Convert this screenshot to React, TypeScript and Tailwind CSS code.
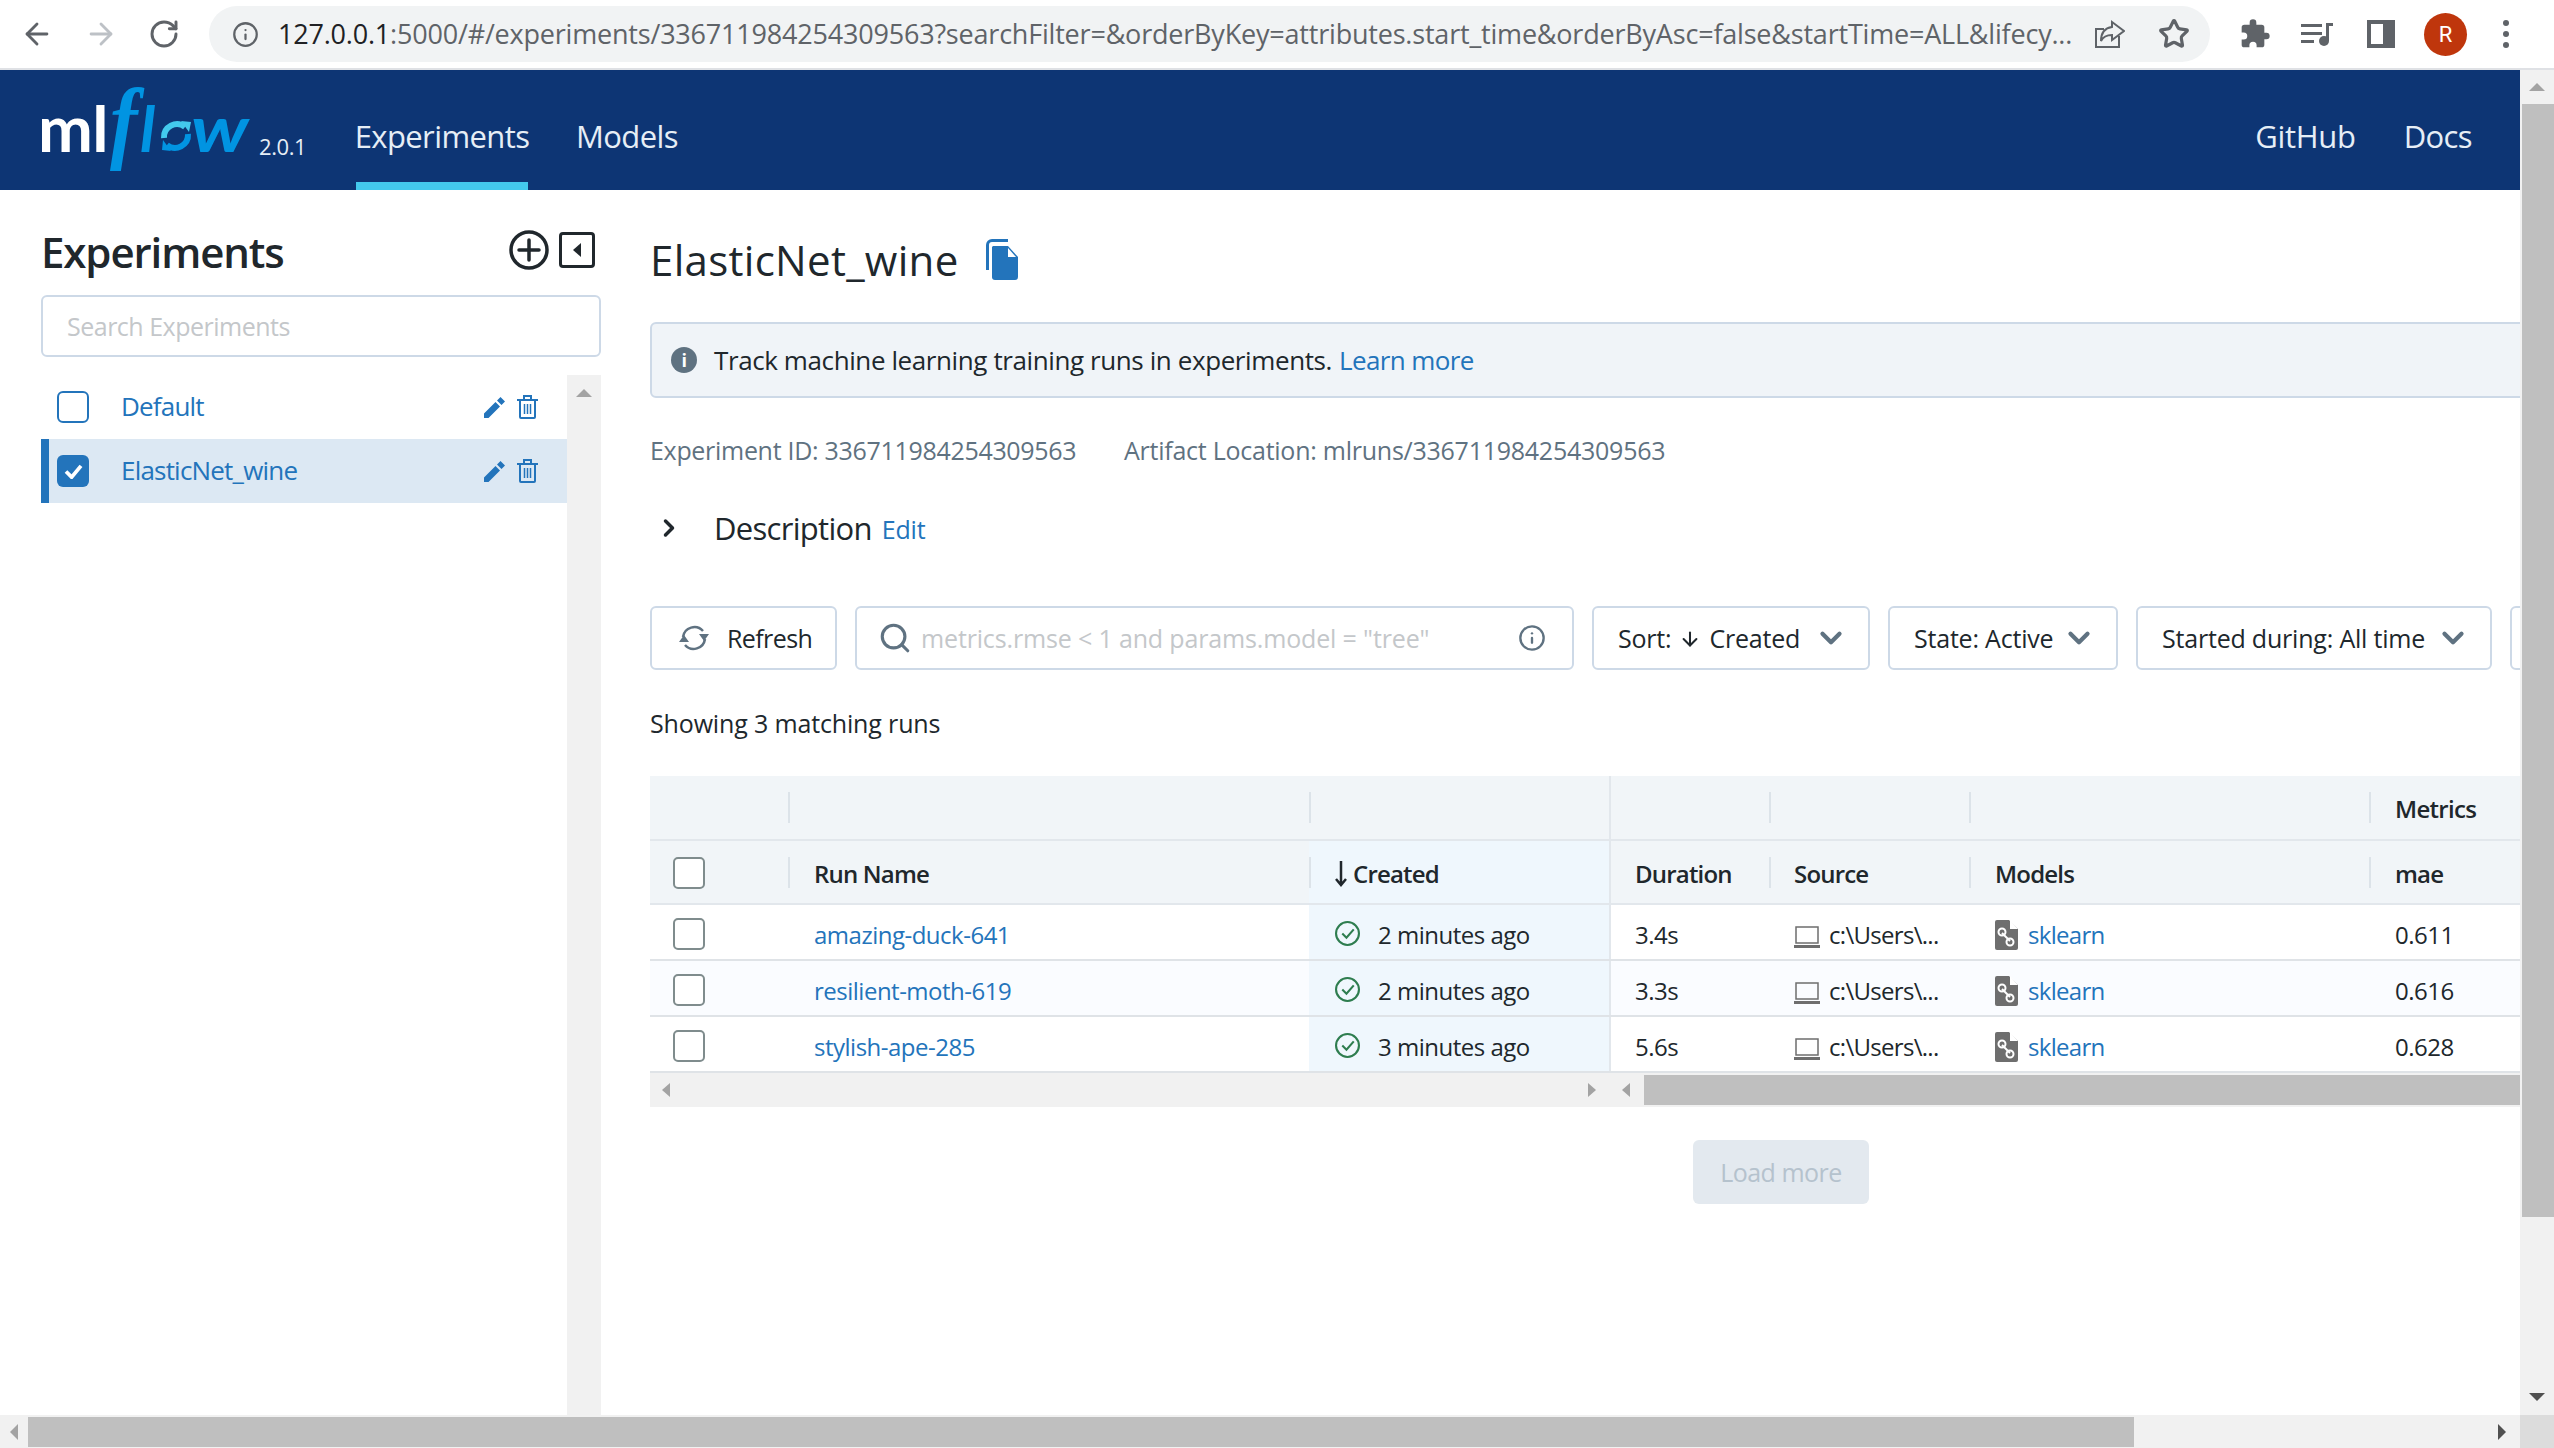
import { ArrowDown, ArrowLeft, ArrowRight, ChevronDown, ChevronRight, Info, RotateCw, Search, Star } from "lucide-react";

const font = "[font-family:'Open_Sans','Noto_Sans',sans-serif]";

const runs = [
  { name: "amazing-duck-641", created: "2 minutes ago", duration: "3.4s", mae: "0.611", bg: "bg-white" },
  { name: "resilient-moth-619", created: "2 minutes ago", duration: "3.3s", mae: "0.616", bg: "bg-[#fafcff]" },
  { name: "stylish-ape-285", created: "3 minutes ago", duration: "5.6s", mae: "0.628", bg: "bg-white" },
];

function Logo() {
  return (
    <div className="flex items-center w-[316px] pl-[41px] h-full shrink-0">
      <svg viewBox="0 0 208 80" className="w-[208px] h-[80px] shrink-0 overflow-visible">
        <text x="-3" y="62" fill="#fff" fontFamily="Lato, sans-serif" fontWeight="700" fontSize="64" textLength="70" lengthAdjust="spacingAndGlyphs">ml</text>
        <text x="69" y="62" fill="#0194e2" fontFamily="'Liberation Serif', serif" fontStyle="italic" fontWeight="700" fontSize="90" textLength="27" lengthAdjust="spacingAndGlyphs">f</text>
        <text x="99" y="62" fill="#0194e2" fontFamily="Lato, sans-serif" fontStyle="italic" fontWeight="700" fontSize="64">l</text>
        <g transform="translate(120 30)" fill="none">
          <path d="M3 18 A13 13 0 0 1 24 7" stroke="#43c9ed" strokeWidth="6" />
          <path d="M27 14 A13 13 0 0 1 6 25" stroke="#0194e2" strokeWidth="6" />
          <path d="M20 1 L30 2 L28 12 Z" fill="#43c9ed" />
          <path d="M10 31 L1 30 L2 20 Z" fill="#0194e2" />
        </g>
        <text x="150" y="62" fill="#0194e2" fontFamily="Lato, sans-serif" fontStyle="italic" fontWeight="700" fontSize="64" textLength="57" lengthAdjust="spacingAndGlyphs">w</text>
      </svg>
      <span className="text-[22px] tracking-[-0.4px] text-[#e6eef6] ml-[10px] mt-[32px]">2.0.1</span>
    </div>
  );
}

function BrowserBar() {
  return (
    <div className="h-[70px] shrink-0 bg-white border-b-2 border-[#dfe1e5] flex items-center text-[#5f6368]">
      <div className="w-[209px] shrink-0 flex items-center pl-[20px] gap-[30px]">
        <ArrowLeft size={34} strokeWidth={2} />
        <ArrowRight size={34} strokeWidth={2} className="text-[#bdc1c6]" />
        <RotateCw size={32} strokeWidth={2.2} />
      </div>
      <div className="w-[2001px] h-[56px] shrink-0 bg-[#f1f3f4] rounded-full flex items-center pl-[23px] pr-[20px]">
        <Info size={27} strokeWidth={2} />
        <div className="ml-[19px] w-[1794px] text-[27px] tracking-[-0.2px] whitespace-nowrap overflow-hidden">
          <span className="text-[#202124]">127.0.0.1</span>:5000/#/experiments/336711984254309563?searchFilter=&amp;orderByKey=attributes.start_time&amp;orderByAsc=false&amp;startTime=ALL&amp;lifecy...
        </div>
        <svg viewBox="0 0 30 28" className="w-[30px] h-[28px] ml-[23px] shrink-0" fill="none" stroke="#5f6368" strokeWidth="2">
          <path d="M24 16v11H1V9h8" />
          <path d="M17 2l12 9-12 9v-5c-6 0-9 2-11 6 0-8 4-13 11-14z" />
        </svg>
        <Star size={32} strokeWidth={2.4} className="ml-[33px] shrink-0" />
      </div>
      <div className="flex-1 flex items-center pl-[29px]">
        <svg viewBox="0 0 24 24" className="w-[32px] h-[32px]" fill="#5f6368">
          <path d="M20.5 11H19V7a2 2 0 0 0-2-2h-4V3.5a2.5 2.5 0 0 0-5 0V5H4a2 2 0 0 0-2 2v3.8h1.5a2.7 2.7 0 0 1 0 5.4H2V20a2 2 0 0 0 2 2h3.8v-1.5a2.7 2.7 0 0 1 5.4 0V22H17a2 2 0 0 0 2-2v-4h1.5a2.5 2.5 0 0 0 0-5z" />
        </svg>
        <svg viewBox="0 0 32 24" className="w-[32px] h-[24px] ml-[30px]" fill="#5f6368">
          <rect x="0" y="2" width="21" height="3" />
          <rect x="0" y="10" width="21" height="3" />
          <rect x="0" y="18" width="13" height="3" />
          <rect x="25" y="1" width="3" height="18" />
          <rect x="25" y="1" width="7" height="3" />
          <circle cx="23" cy="19" r="5" />
        </svg>
        <div className="w-[28px] h-[28px] ml-[34px] border-[4px] border-r-[12px] border-[#5f6368]" />
        <div className="w-[43px] h-[43px] ml-[29px] rounded-full bg-[#bf360c] text-white text-[22px] flex items-center justify-center [font-family:Roboto,sans-serif]">R</div>
        <div className="ml-[36px] flex flex-col gap-[5px]">
          <div className="w-[6px] h-[6px] rounded-full bg-[#5f6368]" />
          <div className="w-[6px] h-[6px] rounded-full bg-[#5f6368]" />
          <div className="w-[6px] h-[6px] rounded-full bg-[#5f6368]" />
        </div>
      </div>
    </div>
  );
}

function Pencil() {
  return (
    <svg viewBox="0 0 21 21" className="w-[21px] h-[21px]" fill="#2374bb">
      <path d="M0 16.5V21h4.5L16 9.5 11.5 5zM13 3.5 17.5 8 21 4.500 16.500 0z" />
    </svg>
  );
}

function Trash() {
  return (
    <svg viewBox="0 0 21 24" className="w-[21px] h-[24px]" fill="none" stroke="#2374bb" strokeWidth="2">
      <path d="M0 5h21M7 5V1h7v4M3 5v17a1 1 0 0 0 1 1h13a1 1 0 0 0 1-1V5" />
      <path d="M7.500 9v10M10.500 9v10M13.500 9v10" strokeWidth="1.500" />
    </svg>
  );
}

function SidebarRow({ label, active }: { label: string; active?: boolean }) {
  return (
    <div className={`h-[64px] flex items-center text-[26px] text-[#2374bb] ${active ? "bg-[#dce8f3] border-l-[8px] border-[#2374bb] pl-[8px]" : "pl-[16px]"}`}>
      {active ? (
        <div className="w-[32px] h-[32px] rounded-[6px] bg-[#2374bb] flex items-center justify-center">
          <svg viewBox="0 0 20 16" className="w-[19px] h-[15px]" fill="none" stroke="white" strokeWidth="4">
            <path d="M2 8l6 6L18 2" />
          </svg>
        </div>
      ) : (
        <div className="w-[32px] h-[32px] rounded-[6px] border-2 border-[#2374bb]" />
      )}
      <span className="ml-[32px] flex-1 tracking-[-0.8px] mt-[-1px]">{label}</span>
      <Pencil />
      <div className="ml-[12px] mr-[29px]">
        <Trash />
      </div>
    </div>
  );
}

function Sidebar() {
  return (
    <div className="w-[601px] shrink-0 pl-[41px] flex flex-col">
      <div className="h-[105px] pt-[40px] flex items-start justify-between">
        <h2 className="text-[42px] leading-[44px] font-semibold text-[#20272c] tracking-[-1.1px]">Experiments</h2>
        <div className="flex items-center gap-[10px] mr-[6px]">
          <svg viewBox="0 0 40 40" className="w-[40px] h-[40px]" fill="none" stroke="#20272c" strokeWidth="3.500">
            <circle cx="20" cy="20" r="18" />
            <path d="M20 10v20M10 20h20" strokeLinecap="round" />
          </svg>
          <div className="w-[36px] h-[36px] rounded-[4px] border-[3.5px] border-[#20272c] flex items-center justify-center">
            <div className="w-0 h-0 border-y-[7px] border-y-transparent border-r-[8px] border-r-[#20272c]" />
          </div>
        </div>
      </div>
      <div className="h-[62px] rounded-[6px] border-2 border-[#cdd9e7] pl-[24px] flex items-center text-[25px] text-[#c4c7ca] tracking-[-0.5px]">
        <span className="mt-[2px]">Search Experiments</span>
      </div>
      <div className="flex-1 mt-[18px] flex">
        <div className="flex-1 flex flex-col">
          <SidebarRow label="Default" />
          <SidebarRow label="ElasticNet_wine" active />
        </div>
        <div className="w-[34px] bg-[#f1f1f1] flex justify-center pt-[14px]">
          <div className="w-0 h-0 border-x-[8px] border-x-transparent border-b-[8px] border-b-[#a3a3a3]" />
        </div>
      </div>
    </div>
  );
}

function ToolButton({ label, width }: { label: React.ReactNode; width: string }) {
  return (
    <div className={`${width} h-[64px] shrink-0 rounded-[6px] border-2 border-[#cdd9e7] flex items-center justify-between pl-[24px] pr-[20px] text-[25px] text-[#20272c] tracking-[-0.2px]`}>
      <span className="whitespace-nowrap flex items-center mt-[1px]">{label}</span>
      <ChevronDown size={34} strokeWidth={3} className="text-[#5f7281]" />
    </div>
  );
}

function Divider() {
  return <div className="absolute left-0 top-[16px] h-[31px] w-[2px] bg-[#dce3e9]" />;
}

const cols = ["w-[138px]", "w-[521px]", "w-[300px]", "w-[160px]", "w-[200px]", "w-[400px]"];

function RunsTable() {
  return (
    <div className="w-[1870px] text-[24px] text-[#20272c] tracking-[-0.5px]">
      <div className="flex h-[65px] bg-[#f1f5f8] border-b-2 border-[#e2e7ec] font-semibold tracking-[-0.7px]">
        <div className={cols[0]} />
        <div className={`${cols[1]} relative`}><Divider /></div>
        <div className={`${cols[2]} relative`}><Divider /></div>
        <div className={`${cols[3]} relative border-l-2 border-[#e2e7ec]`} />
        <div className={`${cols[4]} relative`}><Divider /></div>
        <div className={`${cols[5]} relative`}><Divider /></div>
        <div className="flex-1 relative pl-[26px] pt-[2px] flex items-center"><Divider />Metrics</div>
      </div>
      <div className="flex h-[64px] bg-[#f1f5f8] border-b-2 border-[#e2e7ec] font-semibold tracking-[-0.8px] items-stretch">
        <div className={`${cols[0]} pl-[23px] pt-[2px] flex items-center`}>
          <div className="w-[32px] h-[32px] rounded-[5px] border-2 border-[#7f8c8d] bg-white" />
        </div>
        <div className={`${cols[1]} relative pl-[26px] pt-[3px] flex items-center`}><Divider />Run Name</div>
        <div className={`${cols[2]} relative pl-[26px] pt-[3px] flex items-center bg-[#eff7fd]`}>
          <Divider />
          <svg viewBox="0 0 12 26" className="w-[12px] h-[26px] mr-[6px]" fill="none" stroke="#20272c" strokeWidth="2.500">
            <path d="M6 0v24M1 18l5 6 5-6" />
          </svg>
          Created
        </div>
        <div className={`${cols[3]} relative pl-[24px] pt-[3px] flex items-center border-l-2 border-[#e2e7ec]`}>Duration</div>
        <div className={`${cols[4]} relative pl-[25px] pt-[3px] flex items-center`}><Divider />Source</div>
        <div className={`${cols[5]} relative pl-[26px] pt-[3px] flex items-center`}><Divider />Models</div>
        <div className="flex-1 relative pl-[26px] pt-[3px] flex items-center"><Divider />mae</div>
      </div>
      {runs.map((run) => (
        <div key={run.name} className={`flex h-[56px] ${run.bg} border-b-2 border-[#dfe3e7] items-stretch`}>
          <div className={`${cols[0]} pl-[23px] pt-[4px] flex items-center`}>
            <div className="w-[32px] h-[32px] rounded-[5px] border-2 border-[#7f8c8d] bg-white" />
          </div>
          <div className={`${cols[1]} pl-[26px] pt-[6px] flex items-center text-[#2374bb]`}>{run.name}</div>
          <div className={`${cols[2]} pl-[26px] pt-[2px] flex items-center bg-[#eff7fd]`}>
            <svg viewBox="0 0 24 24" className="w-[25px] h-[25px]" fill="none" stroke="#2e7d4f" strokeWidth="2">
              <circle cx="12" cy="12" r="11" />
              <path d="M7 12l4 4 7-8" />
            </svg>
            <span className="ml-[18px] mt-[4px]">{run.created}</span>
          </div>
          <div className={`${cols[3]} pl-[24px] pt-[6px] flex items-center border-l-2 border-[#e2e7ec]`}>{run.duration}</div>
          <div className={`${cols[4]} pl-[25px] pt-[6px] flex items-center`}>
            <svg viewBox="0 0 26 22" className="w-[26px] h-[22px] mt-[4px]" fill="none">
              <rect x="2" y="1" width="22" height="16" stroke="#6e6e6e" strokeWidth="1.500" />
              <rect x="0" y="19" width="26" height="3" fill="#6e6e6e" />
            </svg>
            <span className="ml-[9px] whitespace-nowrap tracking-[-0.7px]">c:\Users\...</span>
          </div>
          <div className={`${cols[5]} pl-[26px] pt-[6px] flex items-center`}>
            <svg viewBox="0 0 23 30" className="w-[23px] h-[30px]" fill="#6e6e6e">
              <path d="M2 0h12l9 9v19a2 2 0 0 1-2 2H2a2 2 0 0 1-2-2V2a2 2 0 0 1 2-2z" />
              <path d="M15 0l8 9h-8z" fill="#fff" />
              <path d="M7 13l8 8" stroke="#fff" strokeWidth="2" />
              <circle cx="7" cy="12" r="3.500" fill="none" stroke="#fff" strokeWidth="2" />
              <circle cx="15" cy="22" r="3.500" fill="none" stroke="#fff" strokeWidth="2" />
            </svg>
            <span className="ml-[10px] text-[#2374bb] tracking-[-0.7px]">sklearn</span>
          </div>
          <div className="flex-1 pl-[26px] pt-[6px] flex items-center">{run.mae}</div>
        </div>
      ))}
      <div className="flex h-[34px] bg-[#f1f1f1]">
        <div className="w-[960px] flex items-center justify-between pl-[12px] pr-[14px]">
          <div className="w-0 h-0 border-y-[7px] border-y-transparent border-r-[8px] border-r-[#a3a3a3]" />
          <div className="w-0 h-0 border-y-[7px] border-y-transparent border-l-[8px] border-l-[#a3a3a3]" />
        </div>
        <div className="w-[34px] flex items-center pl-[12px]">
          <div className="w-0 h-0 border-y-[7px] border-y-transparent border-r-[8px] border-r-[#a3a3a3]" />
        </div>
        <div className="flex-1 bg-[#bfbfbf] my-[2px]" />
      </div>
    </div>
  );
}

function Main() {
  return (
    <div className="flex-1 min-w-0 pl-[49px] overflow-hidden">
      <div className="mt-[39px] h-[60px] flex items-center">
        <h1 className="text-[42px] font-medium text-[#20272c] tracking-[0.3px]">ElasticNet_wine</h1>
        <svg viewBox="0 0 36 42" className="w-[36px] h-[42px] ml-[25px]" fill="#2374bb">
          <path d="M2 7a6 6 0 0 1 6-6h16v3H8a3 3 0 0 0-3 3v25H2z" />
          <path d="M9 8h15l10 11v20a3 3 0 0 1-3 3H11a3 3 0 0 1-3-3V9z" />
          <path d="M24 10l8 9h-8z" fill="#fff" />
        </svg>
      </div>
      <div className="mt-[33px] w-[1900px] h-[76px] rounded-[6px] border-2 border-[#cdd9e7] bg-[#f0f4f8] flex items-center pl-[19px] text-[26px] text-[#20272c] tracking-[-0.4px]">
        <div className="w-[26px] h-[26px] rounded-full bg-[#5f7281] text-white flex items-center justify-center text-[18px] font-bold">i</div>
        <span className="ml-[17px]">Track machine learning training runs in experiments.</span>
        <span className="ml-[7px] text-[#2374bb] tracking-[-0.6px]">Learn more</span>
      </div>
      <div className="mt-[33px] h-[40px] flex items-center text-[25px] text-[#5f7281] tracking-[-0.3px]">
        <span className="w-[474px]">Experiment ID: 336711984254309563</span>
        <span className="tracking-[-0.25px]">Artifact Location: mlruns/336711984254309563</span>
      </div>
      <div className="mt-[38px] h-[40px] flex items-center text-[#20272c]">
        <ChevronRight size={28} strokeWidth={3} className="ml-[5px] mt-[-3px]" />
        <span className="ml-[31px] text-[31px] tracking-[-0.7px] mt-[-2px]">Description</span>
        <span className="ml-[10px] text-[25px] text-[#2374bb] tracking-[-0.2px] mt-[2px]">Edit</span>
      </div>
      <div className="mt-[57px] flex gap-[18px] h-[64px]">
        <div className="w-[187px] shrink-0 rounded-[6px] border-2 border-[#cdd9e7] flex items-center pl-[26px] text-[25px] text-[#20272c] tracking-[-0.6px]">
          <svg viewBox="0 0 32 32" className="w-[32px] h-[32px]" fill="none" stroke="#5f7281" strokeWidth="2.500">
            <path d="M5 15A11.500 11.500 0 0 1 25 9" />
            <path d="M27 17A11.500 11.500 0 0 1 7 23" />
            <path d="M21 12h10l-5 7zM1 20h10l-5-7z" fill="#5f7281" stroke="none" />
          </svg>
          <span className="ml-[17px] mt-[1px]">Refresh</span>
        </div>
        <div className="w-[719px] shrink-0 rounded-[6px] border-2 border-[#cdd9e7] flex items-center pl-[21px] pr-[26px] text-[25px] text-[#c4c7ca] tracking-[-0.15px]">
          <Search size={34} strokeWidth={2.2} className="text-[#5f7281]" />
          <span className="ml-[9px] flex-1 whitespace-nowrap mt-[1px]">metrics.rmse &lt; 1 and params.model = "tree"</span>
          <Info size={28} strokeWidth={2} className="text-[#5f7281]" />
        </div>
        <ToolButton
          width="w-[278px]"
          label={
            <>
              Sort:
              <ArrowDown size={22} strokeWidth={2.2} className="mx-[8px]" />
              Created
            </>
          }
        />
        <ToolButton width="w-[230px]" label="State: Active" />
        <ToolButton width="w-[356px]" label="Started during: All time" />
        <div className="w-[60px] shrink-0 rounded-[6px] border-2 border-[#cdd9e7]" />
      </div>
      <div className="mt-[34px] h-[40px] flex items-center text-[25px] text-[#20272c] tracking-[-0.15px]">Showing 3 matching runs</div>
      <div className="mt-[32px]">
        <RunsTable />
      </div>
      <div className="mt-[33px] ml-[1043px] w-[176px] h-[64px] rounded-[6px] bg-[#e3e9ef] flex items-center justify-center text-[25px] text-[#b5c2cd] tracking-[-0.5px]">
        <span className="mt-[2px]">Load more</span>
      </div>
    </div>
  );
}

export default function App() {
  return (
    <div className={`${font} w-[2554px] h-[1448px] overflow-hidden flex flex-col bg-white`}>
      <BrowserBar />
      <div className="flex-1 min-h-0 flex">
        <div className="w-[2520px] shrink-0 flex flex-col">
          <div className="h-[120px] shrink-0 bg-[#0d3574] flex items-center text-[31px] text-[#e6eef6] tracking-[-0.6px]">
            <Logo />
            <div className="w-[172px] ml-[40px] h-full flex items-center justify-center border-b-[8px] border-[#43c9ed] pt-[21px]">Experiments</div>
            <div className="ml-[48px] mt-[13px]">Models</div>
            <div className="ml-auto mt-[13px] tracking-[-0.3px]">GitHub</div>
            <div className="ml-[48px] mr-[48px] mt-[13px]">Docs</div>
          </div>
          <div className="flex-1 min-h-0 flex">
            <Sidebar />
            <Main />
          </div>
        </div>
        <div className="w-[34px] shrink-0 bg-[#f1f1f1] flex flex-col items-center">
          <div className="h-[34px] flex items-center">
            <div className="w-0 h-0 border-x-[8px] border-x-transparent border-b-[8px] border-b-[#a3a3a3]" />
          </div>
          <div className="w-[32px] ml-[2px] h-[1113px] bg-[#bfbfbf]" />
          <div className="flex-1 flex items-end pb-[14px]">
            <div className="w-0 h-0 border-x-[8px] border-x-transparent border-t-[8px] border-t-[#505050]" />
          </div>
        </div>
      </div>
      <div className="h-[33px] shrink-0 bg-[#f1f1f1] flex items-center">
        <div className="w-[28px] flex justify-center">
          <div className="w-0 h-0 border-y-[8px] border-y-transparent border-r-[8px] border-r-[#a3a3a3]" />
        </div>
        <div className="w-[2106px] h-[30px] bg-[#bfbfbf]" />
        <div className="flex-1 flex justify-end pr-[14px]">
          <div className="w-0 h-0 border-y-[8px] border-y-transparent border-l-[8px] border-l-[#505050]" />
        </div>
        <div className="w-[34px] h-full bg-[#dcdcdc]" />
      </div>
    </div>
  );
}
